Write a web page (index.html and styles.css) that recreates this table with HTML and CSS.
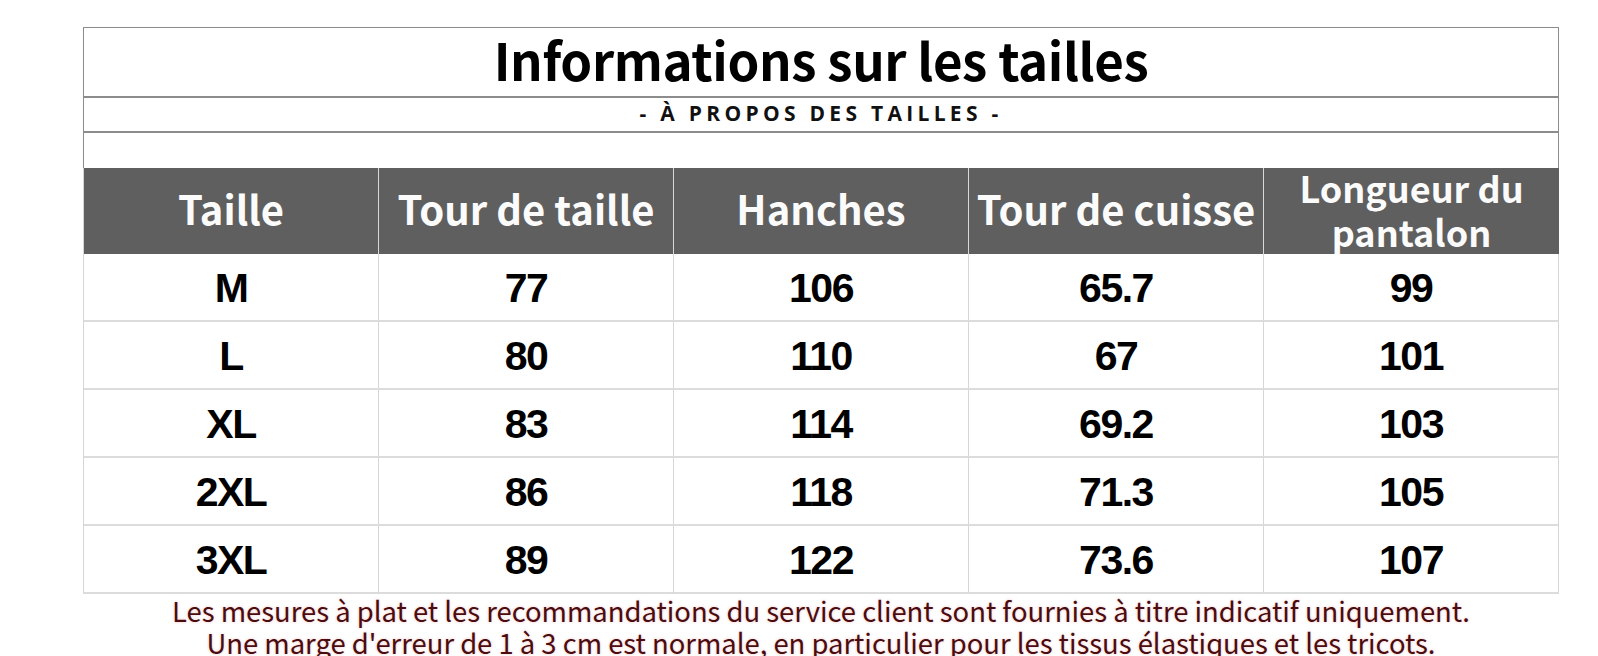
FILE: index.html
```html
<!DOCTYPE html>
<html lang="fr">
<head>
<meta charset="utf-8">
<title>Informations sur les tailles</title>
<link rel="stylesheet" href="styles.css">
</head>
<body>
<main class="page">
  <section class="sheet">
    <div class="box">
      <h1 class="title">Informations sur les tailles</h1>
      <div class="subtitle">- À PROPOS DES TAILLES -</div>
      <div class="spacer"></div>
    </div>
    <div class="grid">
      <div class="hd">Taille</div>
      <div class="hd">Tour de taille</div>
      <div class="hd">Hanches</div>
      <div class="hd">Tour de cuisse</div>
      <div class="hd hd-two">Longueur du<br>pantalon</div>

      <div class="cell">M</div><div class="cell">77</div><div class="cell">106</div><div class="cell">65.7</div><div class="cell last">99</div>
      <div class="cell">L</div><div class="cell">80</div><div class="cell">110</div><div class="cell">67</div><div class="cell last">101</div>
      <div class="cell">XL</div><div class="cell">83</div><div class="cell">114</div><div class="cell">69.2</div><div class="cell last">103</div>
      <div class="cell">2XL</div><div class="cell">86</div><div class="cell">118</div><div class="cell">71.3</div><div class="cell last">105</div>
      <div class="cell">3XL</div><div class="cell">89</div><div class="cell">122</div><div class="cell">73.6</div><div class="cell last">107</div>
    </div>
    <p class="note">Les mesures à plat et les recommandations du service client sont fournies à titre indicatif uniquement.<br>Une marge d'erreur de 1 à 3 cm est normale, en particulier pour les tissus élastiques et les tricots.</p>
  </section>
</main>
</body>
</html>
```
FILE: styles.css
```css
html, body {
  margin: 0;
  padding: 0;
  background: #ffffff;
}
body {
  width: 1598px;
  height: 656px;
  overflow: hidden;
}
.page {
  padding: 27px 0 0 83px;
}
.sheet {
  width: 1476px;
}
.box {
  border: 1px solid #8c8c8c;
  border-bottom: none;
  display: flex;
  flex-direction: column;
}
.title {
  margin: 0;
  height: 70px;
  padding-bottom: 6px;
  box-sizing: border-box;
  border-bottom: 2px solid #8c8c8c;
  display: flex;
  align-items: center;
  justify-content: center;
  font-family: "Noto Sans CJK SC", "Open Sans", sans-serif;
  font-weight: 700;
  font-size: 51px;
  color: #000;
  letter-spacing: -0.4px;
}
.subtitle {
  height: 35px;
  padding-bottom: 4px;
  box-sizing: border-box;
  border-bottom: 2px solid #8c8c8c;
  display: flex;
  align-items: center;
  justify-content: center;
  font-family: "Open Sans", sans-serif;
  font-weight: 700;
  font-size: 21px;
  letter-spacing: 4.3px;
  color: #111;
}
.spacer {
  height: 35px;
}
.grid {
  display: grid;
  grid-template-columns: repeat(5, 1fr);
  grid-template-rows: 86px repeat(5, 68px);
  border-left: 1px solid #d6d6d6;
}
.hd {
  background: #5f5f5f;
  color: #fbfbfb;
  border-right: 1px solid #d8d8d8;
  display: flex;
  align-items: center;
  justify-content: center;
  text-align: center;
  padding-bottom: 6px;
  font-family: "Noto Sans CJK SC", "Open Sans", sans-serif;
  font-weight: 700;
  font-size: 40px;
  line-height: 1;
}
.hd-two {
  border-right: none;
  font-size: 36px;
  line-height: 44px;
  padding-bottom: 4px;
}
.cell {
  border-right: 1px solid #d6d6d6;
  border-bottom: 2px solid #dcdcdc;
  display: flex;
  align-items: center;
  justify-content: center;
  padding-top: 3px;
  font-family: "Liberation Sans Narrow", "Liberation Sans", sans-serif;
  font-weight: 700;
  font-size: 41px;
  letter-spacing: -1.5px;
  color: #000;
}
.note {
  margin: 0;
  text-align: center;
  font-family: "Noto Sans CJK SC", "Open Sans", sans-serif;
  font-size: 27.4px;
  line-height: 32px;
  color: #4a0c0f;
  text-shadow: 0 0 3px rgba(230, 120, 120, 0.45);
}
```
